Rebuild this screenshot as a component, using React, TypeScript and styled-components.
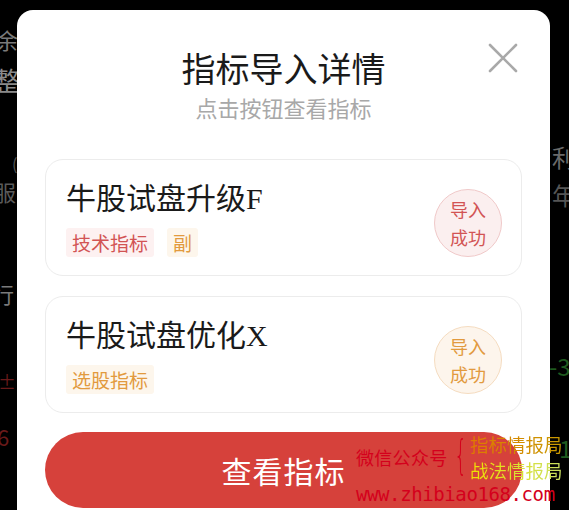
import styled, { createGlobalStyle } from 'styled-components';

const GlobalStyle = createGlobalStyle`
  html, body {
    margin: 0;
    padding: 0;
    background: #000;
  }
  body {
    font-family: "Noto Sans CJK SC", "Noto Sans", sans-serif;
  }
`;

const Screen = styled.div`
  position: relative;
  width: 569px;
  height: 510px;
  overflow: hidden;
  background: #000;
`;

const BackText = styled.span<{ $x: number; $y: number; $color: string; $size: number }>`
  position: absolute;
  left: ${(p) => p.$x}px;
  top: ${(p) => p.$y}px;
  color: ${(p) => p.$color};
  font-size: ${(p) => p.$size}px;
  line-height: 1;
  white-space: nowrap;
`;

const Modal = styled.div`
  position: absolute;
  left: 17px;
  top: 10px;
  width: 533px;
  height: 540px;
  background: #fff;
  border-radius: 16px 16px 0 0;
  box-sizing: border-box;
  padding: 37px 28px 0;
  display: flex;
  flex-direction: column;
`;

const Header = styled.header`
  display: flex;
  flex-direction: column;
  align-items: center;
  gap: 5px;
  margin-bottom: 37px;
`;

const Title = styled.h1`
  margin: 0;
  font-size: 34px;
  font-weight: 400;
  line-height: 41px;
  color: #1a1a1a;
`;

const Subtitle = styled.p`
  margin: 0;
  font-size: 22px;
  line-height: 29px;
  color: #a8a8a8;
`;

const CloseButton = styled.button`
  position: absolute;
  right: 32px;
  top: 33px;
  width: 30px;
  height: 30px;
  padding: 0;
  border: 0;
  background: none;
  svg {
    display: block;
  }
`;

const List = styled.div`
  display: flex;
  flex-direction: column;
  gap: 20px;
`;

const Card = styled.div`
  display: flex;
  align-items: center;
  justify-content: space-between;
  height: 117px;
  box-sizing: border-box;
  border: 1px solid #ececec;
  border-radius: 18px;
  padding: 0 19px 0 20px;
`;

const CardBody = styled.div`
  display: flex;
  flex-direction: column;
  gap: 11px;
  padding-top: 2px;
`;

const CardTitle = styled.div`
  font-family: "Liberation Serif", "Noto Sans CJK SC", serif;
  font-size: 30px;
  line-height: 36px;
  color: #1a1a1a;
`;

const Tags = styled.div`
  display: flex;
  gap: 13px;
`;

const Tag = styled.span<{ $tone: 'red' | 'orange' }>`
  display: inline-flex;
  align-items: center;
  height: 29px;
  padding: 0 6px;
  border-radius: 3px;
  font-size: 19px;
  background: ${(p) => (p.$tone === 'red' ? '#fdf1f1' : '#fdf6ec')};
  color: ${(p) => (p.$tone === 'red' ? '#d25454' : '#e29a3e')};
`;

const Badge = styled.div<{ $tone: 'red' | 'orange' }>`
  width: 68px;
  height: 68px;
  margin-top: 11px;
  box-sizing: border-box;
  border-radius: 50%;
  display: flex;
  flex-direction: column;
  align-items: center;
  justify-content: center;
  font-size: 18px;
  line-height: 28px;
  border: 1px solid ${(p) => (p.$tone === 'red' ? '#f0c9c9' : '#f5dcc0')};
  background: ${(p) => (p.$tone === 'red' ? '#fbefef' : '#fdf5ec')};
  color: ${(p) => (p.$tone === 'red' ? '#d25454' : '#e29a3e')};
`;

const ViewButton = styled.button`
  margin-top: 19px;
  height: 76px;
  border: 0;
  border-radius: 38px;
  background: #d6413b;
  color: #fff;
  font-family: "Noto Sans CJK SC", sans-serif;
  font-size: 30px;
  letter-spacing: 1px;
`;

const Watermark = styled.div`
  position: absolute;
  left: 356px;
  top: 431px;
  display: flex;
  flex-direction: column;
  font-family: "Noto Sans CJK SC", sans-serif;
  white-space: nowrap;
`;

const WxRow = styled.div`
  display: flex;
  align-items: center;
`;

const WxLabel = styled.span`
  font-size: 18px;
  line-height: 24px;
  color: #d4001c;
  letter-spacing: 0.3px;
`;

const Brace = styled.span`
  font-family: "DejaVu Sans", sans-serif;
  font-size: 40px;
  line-height: 1;
  color: #d4001c;
  font-weight: 300;
  margin: 0 -3px 4px 0;
  transform: scaleX(0.5);
`;

const Names = styled.div`
  display: flex;
  flex-direction: column;
  font-size: 18.5px;
  line-height: 26px;
`;

const NameA = styled.span`
  background: linear-gradient(90deg, #e07a00, #c89a00);
  -webkit-background-clip: text;
  background-clip: text;
  color: transparent;
`;

const NameB = styled.span`
  background: linear-gradient(90deg, #f0e000, #c8e060);
  -webkit-background-clip: text;
  background-clip: text;
  color: transparent;
`;

const Url = styled.span`
  font-family: "DejaVu Sans Mono", monospace;
  font-size: 19px;
  line-height: 22px;
  color: #d4001c;
  letter-spacing: -0.4px;
`;

function CloseIcon() {
  return (
    <svg width="30" height="30" viewBox="0 0 30 30">
      <path d="M2 2 L28 28 M28 2 L2 28" stroke="#a9a9a9" strokeWidth="2.6" strokeLinecap="round" />
    </svg>
  );
}

const items = [
  { name: '牛股试盘升级F', tone: 'red' as const, tags: [['技术指标', 'red'], ['副', 'orange']] as const },
  { name: '牛股试盘优化X', tone: 'orange' as const, tags: [['选股指标', 'orange']] as const },
];

export default function App() {
  return (
    <Screen>
      <GlobalStyle />
      <BackText $x={-4} $y={28} $color="#7a7a7a" $size={22}>余计</BackText>
      <BackText $x={-6} $y={67} $color="#8a8a8a" $size={26}>整</BackText>
      <BackText $x={12} $y={155} $color="#555" $size={16}>(</BackText>
      <BackText $x={-6} $y={180} $color="#5a5a5a" $size={22}>服</BackText>
      <BackText $x={-8} $y={282} $color="#7a7a7a" $size={22}>行</BackText>
      <BackText $x={-2} $y={372} $color="#6a1a1a" $size={18}>±</BackText>
      <BackText $x={-3} $y={425} $color="#6a1a1a" $size={22}>6</BackText>
      <BackText $x={552} $y={145} $color="#6a6a6a" $size={24}>利</BackText>
      <BackText $x={552} $y={183} $color="#555" $size={24}>年</BackText>
      <BackText $x={549} $y={354} $color="#1f5a1f" $size={24}>-3</BackText>
      <BackText $x={559} $y={436} $color="#1f5a1f" $size={24}>1</BackText>

      <Modal>
        <Header>
          <Title>指标导入详情</Title>
          <Subtitle>点击按钮查看指标</Subtitle>
        </Header>
        <CloseButton aria-label="close">
          <CloseIcon />
        </CloseButton>
        <List>
          {items.map((item) => (
            <Card key={item.name}>
              <CardBody>
                <CardTitle>{item.name}</CardTitle>
                <Tags>
                  {item.tags.map(([label, tone]) => (
                    <Tag key={label} $tone={tone}>{label}</Tag>
                  ))}
                </Tags>
              </CardBody>
              <Badge $tone={item.tone}>
                <span>导入</span>
                <span>成功</span>
              </Badge>
            </Card>
          ))}
        </List>
        <ViewButton>查看指标</ViewButton>
      </Modal>

      <Watermark>
        <WxRow>
          <WxLabel>微信公众号</WxLabel>
          <Brace>{'{'}</Brace>
          <Names>
            <NameA>指标情报局</NameA>
            <NameB>战法情报局</NameB>
          </Names>
        </WxRow>
        <Url>www.zhibiao168.com</Url>
      </Watermark>
    </Screen>
  );
}
